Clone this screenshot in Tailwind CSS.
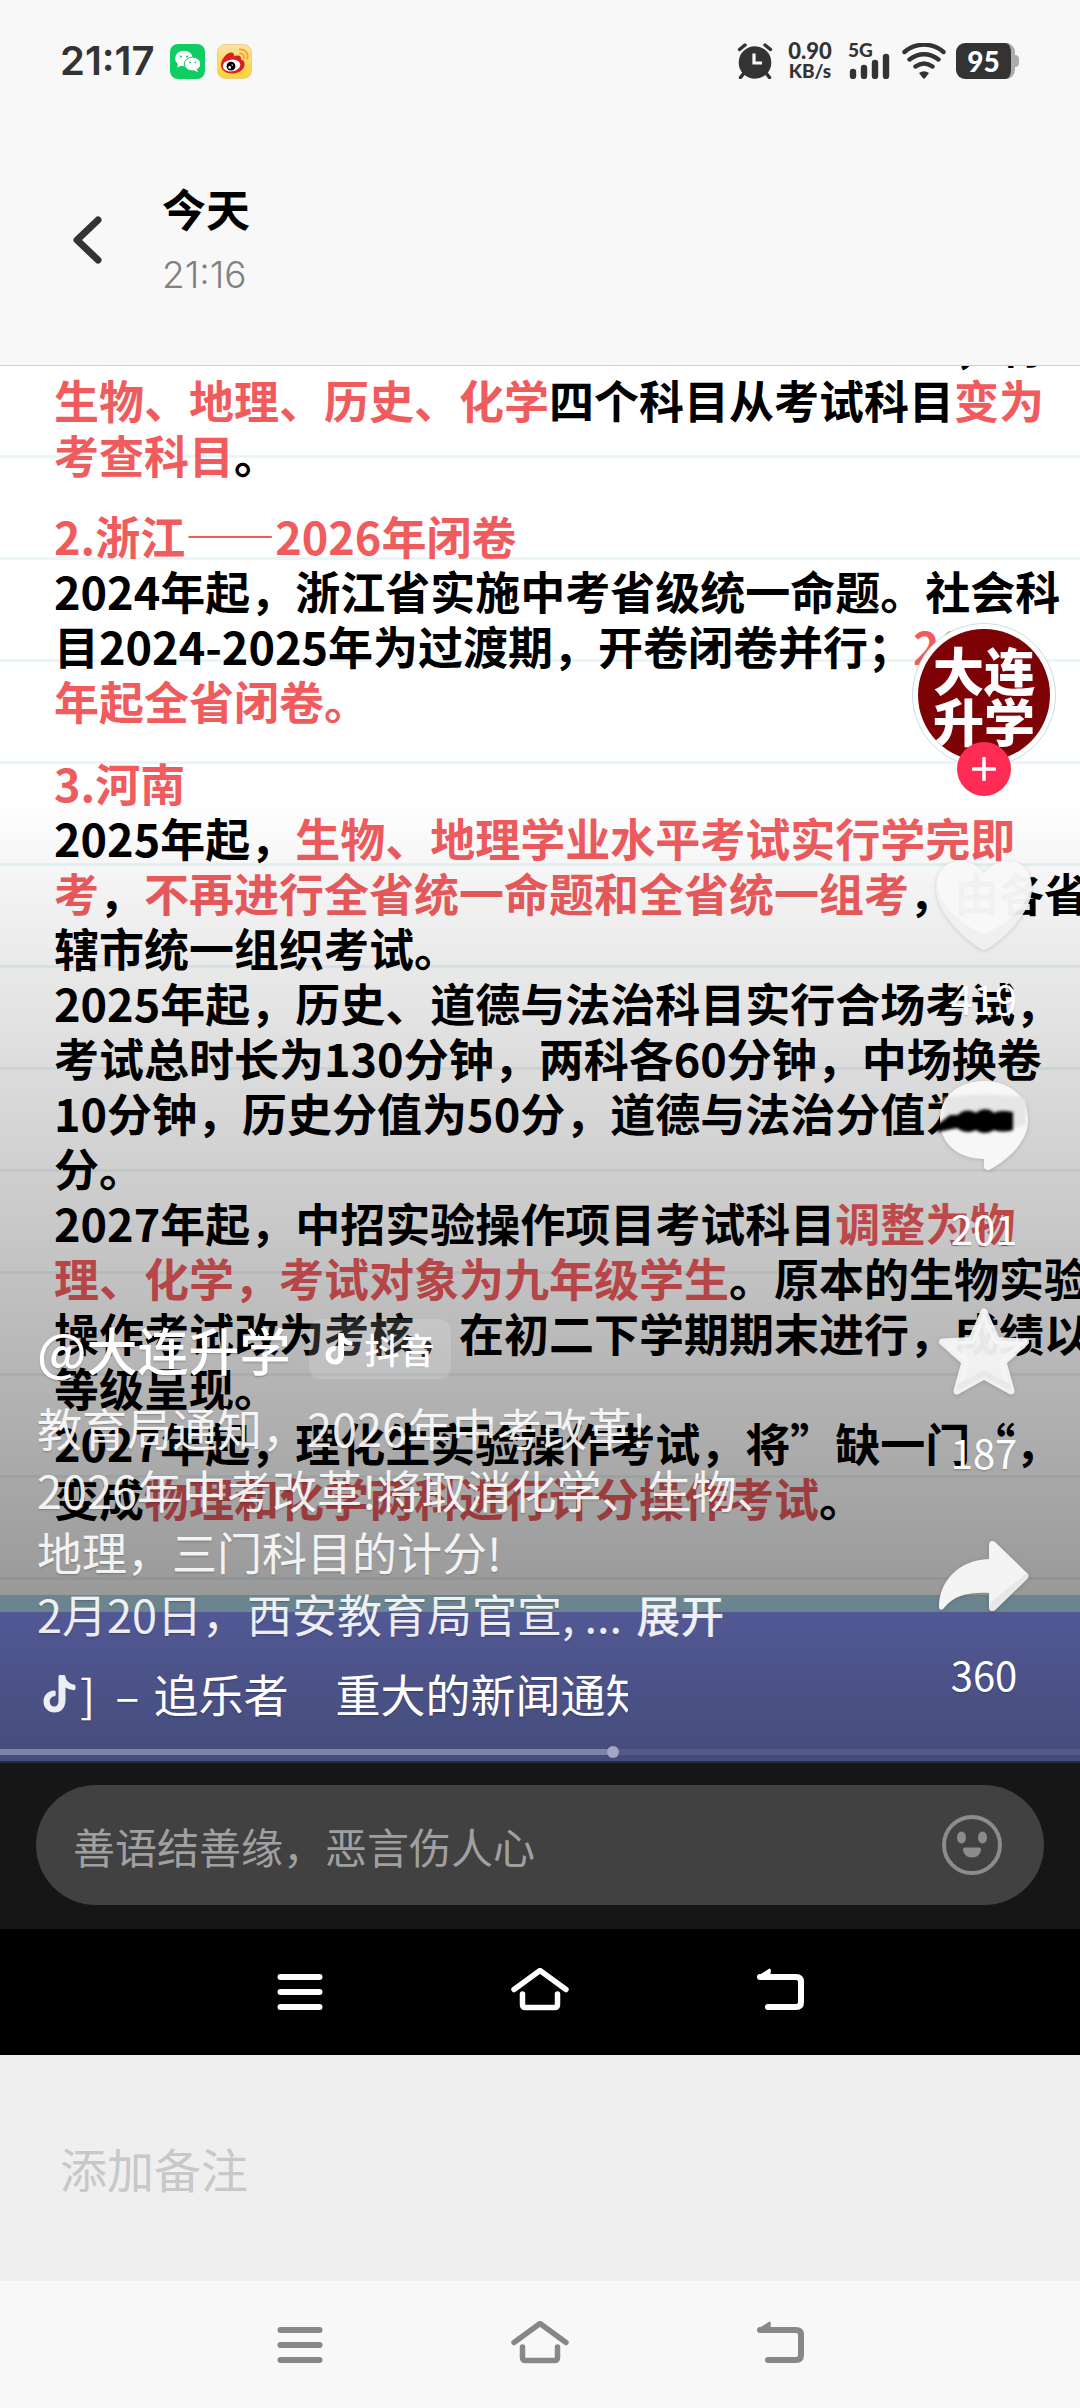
<!DOCTYPE html>
<html lang="zh-CN">
<head>
<meta charset="utf-8">
<meta name="viewport" content="width=device-width, initial-scale=1">
<title>今天 21:16</title>
<script src="https://cdn.jsdelivr.net/npm/@tailwindcss/browser@4"></script>
</head>
<body class="flex min-h-screen flex-col bg-[#f8f8f8] font-['Noto_Sans_CJK_SC',sans-serif]">

<svg class="hidden" aria-hidden="true">
  <symbol id="note" viewBox="0 0 33 38">
    <path d="M15.500 1.500C15.500 .6 16.200 0 17.200 0h3.600c.8 0 1.500.6 1.600 1.400.6 4.200 3.800 7.400 8.600 8 .9.100 1.500.8 1.500 1.600v2.600c0 1-.8 1.700-1.700 1.600-3.100-.2-5.900-1.200-8.300-2.900v12.900C22.500 32.700 17.900 37.500 11.600 37.500S.5 32.800.5 26.500c0-6.200 4.600-10.900 10.500-11.100 1 0 1.700.7 1.700 1.600v2.700c0 .9-.7 1.500-1.600 1.600-2.500.3-4.400 2.500-4.400 5.100 0 2.900 2.100 5.100 4.700 5.100 2.500 0 4.100-2.100 4.100-5z" fill="currentColor"/>
  </symbol>
  <symbol id="nav-menu" viewBox="0 0 60 48">
    <path d="M10.500 9h39M10.500 24h39M10.500 39h39" fill="none" stroke="currentColor" stroke-width="6" stroke-linecap="round"/>
  </symbol>
  <symbol id="nav-home" viewBox="0 0 60 48">
    <path d="M4 21.500 30 2.500 56 21.500M12.500 26v10.500q0 3 3 3h29q3 0 3-3V26" fill="none" stroke="currentColor" stroke-width="5.500" stroke-linecap="round" stroke-linejoin="round"/>
  </symbol>
  <symbol id="nav-back" viewBox="0 0 60 48">
    <path d="M10 9h36q5 0 5 5v20q0 5-5 5H18" fill="none" stroke="currentColor" stroke-width="6" stroke-linecap="round" stroke-linejoin="round"/>
    <path d="M7 8.500 19.500.5q2 0 1 5L18 10l-8 1z" fill="currentColor"/>
  </symbol>
</svg>

<header class="border-b border-[#cfcfcf]">
  <div class="flex h-[122px] items-center justify-between pl-[60px] pr-[61px] text-[#333]">
    <div class="flex items-center">
      <span class="w-[110px] font-[Inter,sans-serif] text-[40px] font-semibold leading-[48px]">21:17</span>
      <svg class="mr-3 size-[35px]" viewBox="0 0 35 35" role="img" aria-label="微信">
        <rect width="35" height="35" rx="8" fill="#0fcd63"/>
        <ellipse cx="14" cy="14.500" rx="9" ry="7.700" fill="#fff"/><path d="m8 20-.8 3.500 4.500-2z" fill="#fff"/>
        <ellipse cx="22.500" cy="20" rx="8.200" ry="6.900" fill="#fff" stroke="#0fcd63"/><path d="m27 25.500.8 2.600-4-1.600z" fill="#fff"/>
        <g fill="#0fcd63"><circle cx="11" cy="12.500" r="1.100"/><circle cx="17" cy="12.500" r="1.100"/><circle cx="20" cy="18.300" r=".9"/><circle cx="25.500" cy="18.300" r=".9"/></g>
      </svg>
      <svg class="size-[35px]" viewBox="0 0 35 35" role="img" aria-label="微博">
        <defs><linearGradient id="wb" x1="0" y1="0" x2="0" y2="1"><stop offset="0" stop-color="#fbe3a6"/><stop offset="1" stop-color="#fdd22e"/></linearGradient></defs>
        <rect x=".5" y=".5" width="34" height="34" rx="8" fill="url(#wb)" stroke="#e9cf8d"/>
        <path d="M4 21C4 14 12 6.500 16 9c1.200.8 1 2.500.8 3.500 3.200-1.600 8-1.400 7 2.700 3.500 1.500 4.500 4 3.500 7C25.700 27 20.500 29.500 15 29.500 9 29.500 4 26.500 4 21z" fill="#dc1e1e"/>
        <ellipse cx="14.500" cy="21.500" rx="8.800" ry="5.900" fill="#fff" transform="rotate(-8 14.500 21.500)"/>
        <circle cx="14" cy="22.200" r="4.400" fill="#000"/><circle cx="12.700" cy="23.400" r="1.300" fill="#fff"/><circle cx="15.200" cy="21" r=".7" fill="#fff"/>
        <path d="M23 5.500c5.500-.7 8.600 4 7.300 9M23 9.500c3-.3 4.500 2 3.700 4.500" fill="none" stroke="#f2a531" stroke-width="2" stroke-linecap="round"/>
      </svg>
    </div>
    <div class="flex items-center">
      <svg class="mr-[15px] h-9 w-[36px]" viewBox="0 0 36 36" role="img" aria-label="闹钟">
        <circle cx="18" cy="19.500" r="16.300" fill="#333"/>
        <path d="M2.500 6.500 8 2M33.500 6.500 28 2" stroke="#333" stroke-width="3.500" stroke-linecap="round"/>
        <path d="m7 30-3.500 4.500M29 30l3.500 4.500" stroke="#333" stroke-width="3.500" stroke-linecap="round"/>
        <path d="M17 10.500V20h8" fill="none" stroke="#f8f8f8" stroke-width="3.200"/>
      </svg>
      <div class="mr-4 flex w-[44px] flex-col items-center font-[Lato,sans-serif] font-black leading-[20px]">
        <span class="text-[22px]">0.90</span><span class="text-[19px]">KB/s</span>
      </div>
      <svg class="mr-3 h-9 w-[42px] font-[Lato,sans-serif]" viewBox="0 0 42 36" role="img" aria-label="5G 信号">
        <text x="0" y="14" font-size="19" font-weight="900" fill="#333">5G</text>
        <path d="M5 29v4M16 25v8M27 20v13M38 14v19" stroke="#333" stroke-width="6.400" stroke-linecap="round"/>
      </svg>
      <svg class="mr-2.5 h-9 w-[44px]" viewBox="0 0 44 36" role="img" aria-label="无线网络">
        <path d="M2.500 9C14-.8 30-.8 41.500 9M7.500 16.500c9-7 20-7 29 0M13.500 23.500c5.500-4 11.500-4 17 0" fill="none" stroke="#333" stroke-width="4.400" stroke-linecap="round"/>
        <path d="M17 30q5-3.500 10 0l-3.800 5q-1.200 1.500-2.400 0z" fill="#333"/>
      </svg>
      <div class="flex items-center">
        <div class="flex h-9 w-[59px] items-center justify-center rounded-[9px] border-r-4 border-[#acacac] bg-[#333] font-[Lato,sans-serif] text-[28px] font-black leading-none text-white">95</div>
        <div class="h-3 w-1 rounded-r bg-[#acacac]"></div>
      </div>
    </div>
  </div>
  <div class="flex h-[243px] items-start pl-[53px] pt-14">
    <button class="mr-[43px] mt-[37px] flex h-[50px] w-[66px] items-center justify-center" aria-label="返回">
      <svg class="h-[50px] w-[60px]" viewBox="0 0 60 50"><path d="M42 5 21 25l21 20" fill="none" stroke="#333" stroke-width="7" stroke-linejoin="round" stroke-linecap="round"/></svg>
    </button>
    <div class="flex flex-col">
      <h1 class="text-[44px] font-bold leading-[60px] text-black">今天</h1>
      <time class="mt-[13px] font-[Inter,sans-serif] text-[37px] font-light leading-[48px] text-[#808080]">21:16</time>
    </div>
  </div>
</header>

<main class="relative overflow-hidden border-b-2 border-[#2a2b40] bg-white">
  <!-- exam notice on ruled paper -->
  <article class="-mt-[49px] h-[1278px] whitespace-nowrap bg-[repeating-linear-gradient(to_bottom,transparent_0,transparent_99px,#eef8f9_99px,#e4f3f5_101px,#f2fafa_102px)] bg-[position:0_39px] pl-[54px] text-[45px] font-bold leading-[55px] text-black">
    <p class="pl-[900px]">，将</p>
    <p class="mb-[26px]"><span class="text-[#f05c5e]">生物、地理、历史、化学</span>四个科目从考试科目<span class="text-[#f05c5e]">变为<br>考查科目</span>。</p>
    <h2 class="text-[#f05c5e]">2.浙江——2026年闭卷</h2>
    <p class="mb-[27px]">2024年起，浙江省实施中考省级统一命题。社会科<br>目2024-2025年为过渡期，开卷闭卷并行；<span class="text-[#f05c5e]">2026<br>年起全省闭卷。</span></p>
    <h2 class="text-[#f05c5e]">3.河南</h2>
    <p>2025年起，<span class="text-[#f05c5e]">生物、地理学业水平考试实行学完即<br>考</span>，<span class="text-[#f05c5e]">不再进行全省统一命题和全省统一组考</span>，由各省<br>辖市统一组织考试。</p>
    <p>2025年起，历史、道德与法治科目实行合场考试，<br>考试总时长为130分钟，两科各60分钟，中场换卷<br>10分钟，历史分值为50分，道德与法治分值为70<br>分。</p>
    <p>2027年起，中招实验操作项目考试科目<span class="text-[#f05c5e]">调整为物<br>理、化学，考试对象为九年级学生</span>。原本的生物实验<br>操作考试改为考核，在初二下学期期末进行，成绩以<br>等级呈现。</p>
    <p>2027年起，理化生实验操作考试，将”缺一门“，<br>变成<span class="text-[#f05c5e]">物理和化学两科进行计分操作考试</span>。</p>
  </article>
  <div class="absolute inset-x-0 bottom-[166px] h-[800px] bg-linear-to-b from-black/0 to-black/40"></div>
  <div class="h-[17px] bg-[#6b8590]"></div>
  <div class="h-[149px] bg-linear-to-b from-[#525894] to-[#454c7b]"></div>

  <!-- caption over the video -->
  <section class="absolute bottom-9 left-[37px] text-white">
    <div class="flex items-center gap-[18px]">
      <a href="#" class="text-[51px] font-medium leading-[60px] text-shadow-sm">@大连升学</a>
      <span class="flex h-[60px] items-center gap-3 rounded-xl bg-white/15 px-4 text-[35px] font-medium">
        <svg class="h-[32px] w-[28px]"><use href="#note"/></svg>抖音
      </span>
    </div>
    <p class="mt-[18px] whitespace-nowrap text-[45px] leading-[62px] text-white/90 text-shadow-sm">教育局通知，2026年中考改革!<br>2026年中考改革!将取消化学、生物、<br>地理，三门科目的计分!<br>2月20日，西安教育局官宣, ... <button class="pl-1 text-[44px] font-medium leading-[50px]">展开</button></p>
    <div class="mt-[18px] flex h-[62px] items-center gap-1 pl-1.5">
      <svg class="h-[38px] w-[33px] shrink-0 text-white/90"><use href="#note"/></svg>
      <a href="#" class="w-[548px] overflow-hidden whitespace-pre text-[45px] leading-[62px] text-shadow-sm">]  – <span class="pl-1">追乐者</span><span class="pl-[47px]">重大的新闻通知</span></a>
    </div>
  </section>

  <!-- action rail -->
  <aside class="absolute bottom-[65px] right-6 flex w-[144px] flex-col items-center text-[40px] leading-[44px] text-white">
    <a href="#" class="relative mb-[88px] flex size-[144px] items-center justify-center rounded-full border border-[#ccdde0] bg-white" aria-label="大连升学">
      <span class="flex size-[132px] items-center justify-center overflow-hidden rounded-full bg-[#7c0206] text-center text-[51px] font-black leading-[51px]">大连<br>升学</span>
      <span class="absolute -bottom-[30px] flex size-[54px] items-center justify-center rounded-full bg-[#fe2c55]">
        <svg class="size-6" viewBox="0 0 24 24"><path d="M12 1.500v21M1.500 12h21" stroke="#fff" stroke-width="3.600" stroke-linecap="round"/></svg>
      </span>
    </a>
    <button class="mb-[52px] flex flex-col items-center gap-[21px]" aria-label="赞 419">
      <svg class="h-[100px] w-[104px] drop-shadow-sm" viewBox="0 0 104 100">
        <path d="M52 95C47 95 4 63 4 33 4 16 14 6 28 6c11 0 19 6 24 12C57 12 65 6 76 6c14 0 24 10 24 27 0 30-43 62-48 62z" fill="#f2f2f2" fill-opacity=".93"/>
        <path d="M52 79C42 76 8 56 5 30 6 15 16 6 28 6c11 0 19 6 24 12C57 12 65 6 76 6c12 0 22 9 23 24-3 26-37 46-47 49z" fill="#fff" fill-opacity=".55"/>
      </svg>
      <span class="text-shadow-sm">419</span>
    </button>
    <button class="mb-[50px] flex flex-col items-center gap-[34px]" aria-label="评论 201">
      <svg class="h-[100px] w-[104px] drop-shadow-sm" viewBox="0 0 104 100">
        <defs><filter id="soft" x="-20%" y="-50%" width="140%" height="200%"><feGaussianBlur stdDeviation="1.600"/></filter></defs>
        <path d="M52 9c25 0 44 15 44 39 0 21-18 38-37 49-3 2-7 1-7-3v-7C27 87 8 72 8 48S27 9 52 9z" fill="#f7f7f7"/>
        <path d="M12 26q40-7 82 0v27q-40 10-82 0z" fill="#e6e6e6" filter="url(#soft)"/>
        <path d="M4 54 18 43h8c6-6 13-5 18-2 6-5 13-5 18 0 6-3 12-2 19-1v18c-6 2-13 2-19 0-6 4-13 4-18 0-6 3-13 3-19-2L6 60z" fill="#060606" filter="url(#soft)"/>
      </svg>
      <span class="text-shadow-sm">201</span>
    </button>
    <button class="mb-[50px] flex flex-col items-center gap-[30px]" aria-label="收藏 187">
      <svg class="h-[100px] w-[104px] drop-shadow-sm" viewBox="0 0 104 100">
        <path d="m52 12 12.500 28.500 29 1.500L71 62l8 29-27-15-27 15 8-29-22.500-20 29-1.500z" fill="#f7f7f7" fill-opacity=".94" stroke="#f5f5f5" stroke-opacity=".94" stroke-width="7" stroke-linejoin="round"/>
        <path d="m52 76 27 15-1-7-26-14-26 14-1 7z" fill="#e8e8e8"/>
      </svg>
      <span class="text-shadow-sm">187</span>
    </button>
    <button class="flex flex-col items-center gap-[28px]" aria-label="分享 360">
      <svg class="h-[100px] w-[104px] drop-shadow-sm" viewBox="0 0 104 100">
        <path d="M57 21c0-4 3-5 6-3l32 31c2 2 2 4 0 6L63 86c-3 2-6 1-6-3V69C38 68 22 71 12 84c-2 3-5 2-5-1 0-26 20-47 50-48z" fill="#f4f4f4"/>
        <path d="M57 83c0 4 3 5 6 3l32-31c2-2 2-4 0-6L60 77z" fill="#e8e8e8"/>
      </svg>
      <span class="text-shadow-sm">360</span>
    </button>
  </aside>

  <!-- playback progress -->
  <div class="absolute inset-x-0 bottom-1.5 h-1.5 bg-white/8">
    <div class="relative h-full rounded-r bg-white/25" style="width:56.800%">
      <span class="absolute -right-1.5 -top-[3px] size-3 rounded-full bg-[#a3a6c4]"></span>
    </div>
  </div>
</main>

<div class="bg-[#161616] px-9 pb-6 pt-[22px]">
  <div class="flex h-[120px] items-center rounded-full bg-[#414141] pl-[37px] pr-[42px]">
    <input type="text" aria-label="评论" placeholder="善语结善缘，恶言伤人心" class="min-w-0 flex-1 bg-transparent text-[42px] text-white outline-none placeholder:text-[#a0a0a0]">
    <button aria-label="表情">
      <svg class="size-[60px]" viewBox="0 0 60 60"><circle cx="30" cy="30" r="28" fill="none" stroke="#8c8c8c" stroke-width="4"/><g fill="#8c8c8c"><ellipse cx="19.500" cy="22.500" rx="4.500" ry="6"/><ellipse cx="40.500" cy="22.500" rx="4.500" ry="6"/><path d="M21 34q0-1.500 1.500-1.500h15q1.500 0 1.500 1.500c0 5-4 8.500-9 8.500s-9-3.500-9-8.500z"/></g></svg>
    </button>
  </div>
</div>

<nav class="flex h-[126px] items-center justify-center gap-[180px] bg-black text-white" aria-label="视频截图导航">
  <button aria-label="菜单"><svg class="h-12 w-[60px]"><use href="#nav-menu"/></svg></button>
  <button aria-label="主页"><svg class="h-12 w-[60px]"><use href="#nav-home"/></svg></button>
  <button aria-label="后退"><svg class="h-12 w-[60px]"><use href="#nav-back"/></svg></button>
</nav>

<div class="flex h-[226px] items-center bg-[#efefef] px-[60px]">
  <input type="text" aria-label="备注" placeholder="添加备注" class="w-full bg-transparent text-[47px] text-black outline-none placeholder:text-[#c8c8c8]">
</div>

<nav class="flex h-[127px] items-center justify-center gap-[180px] text-[#888]" aria-label="系统导航">
  <button aria-label="菜单"><svg class="h-12 w-[60px]"><use href="#nav-menu"/></svg></button>
  <button aria-label="主页"><svg class="h-12 w-[60px]"><use href="#nav-home"/></svg></button>
  <button aria-label="后退"><svg class="h-12 w-[60px]"><use href="#nav-back"/></svg></button>
</nav>
</body>
</html>
